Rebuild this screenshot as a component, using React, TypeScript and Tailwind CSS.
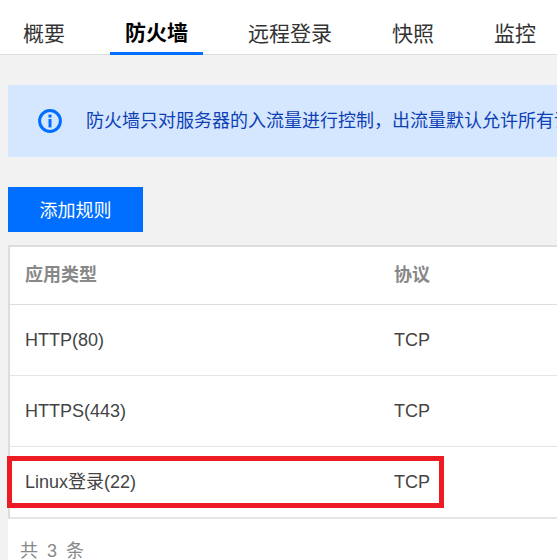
const font = { fontFamily: '"Liberation Sans", "Noto Sans CJK SC", sans-serif' };

const tabs = ["概要", "防火墙", "远程登录", "快照", "监控"];

const rows = [
  { name: "HTTP(80)", protocol: "TCP" },
  { name: "HTTPS(443)", protocol: "TCP" },
  { name: "Linux登录(22)", protocol: "TCP", marked: true },
];

function InfoIcon() {
  return (
    <svg width="24" height="24" viewBox="0 0 24 24" fill="none" className="shrink-0">
      <circle cx="12" cy="12" r="10.4" stroke="#006eff" strokeWidth="3" />
      <rect x="10.5" y="5.6" width="3" height="3" fill="#006eff" />
      <rect x="10.5" y="10" width="3" height="8.4" fill="#006eff" />
    </svg>
  );
}

export default function App() {
  return (
    <div style={font} className="h-[560px] w-[557px] overflow-hidden bg-[#f2f2f2]">
      <div className="flex h-[55px] gap-[30px] border-b border-[#dddddd] bg-white pl-2">
        {tabs.map((tab, i) => (
          <div
            key={tab}
            className={
              i === 1
                ? "-mb-px flex h-[55px] shrink-0 items-center border-b-[3px] border-[#006eff] px-[15px] pt-[13px] text-[21px] font-bold text-black"
                : "flex h-[54px] shrink-0 items-center px-[15px] pt-[13px] text-[21px] text-[#333333]"
            }
          >
            {tab}
          </div>
        ))}
      </div>

      <div className="pt-[30px] pl-2">
        <div className="flex h-[72px] w-[700px] items-center gap-[24px] bg-[#d5e7ff] pl-[30px]">
          <InfoIcon />
          <span className="whitespace-nowrap text-[18px] text-[#0f3fb5]">
            防火墙只对服务器的入流量进行控制，出流量默认允许所有请求
          </span>
        </div>

        <button className="mt-[30px] block h-[45px] w-[135px] bg-[#006eff] pt-[3px] text-[18px] text-white">
          添加规则
        </button>

        <div className="mt-[13px] w-[700px] border-t-2 border-l-2 border-[#dddddd] bg-white">
          <div className="flex h-[58px] items-center border-b border-[#dddddd] pl-[15px] text-[18px] font-bold text-[#888888]">
            <span className="w-[369px]">应用类型</span>
            <span>协议</span>
          </div>
          {rows.map((row) => (
            <div
              key={row.name}
              className="relative flex h-[71px] items-center border-b border-[#e5e5e5] pl-[15px] text-[18px] text-[#444444]"
            >
              <span className="w-[369px]">{row.name}</span>
              <span>{row.protocol}</span>
              {row.marked && (
                <div className="absolute top-[9px] left-[-3px] h-[52px] w-[437px] border-[5px] border-[#ed1c24]" />
              )}
            </div>
          ))}
        </div>

        <div className="h-[60px] border-t border-[#e5e5e5] bg-white pt-[19px] pl-[12px] text-[18px] tracking-[2px] text-[#888888]">
          共 3 条
        </div>
      </div>
    </div>
  );
}
